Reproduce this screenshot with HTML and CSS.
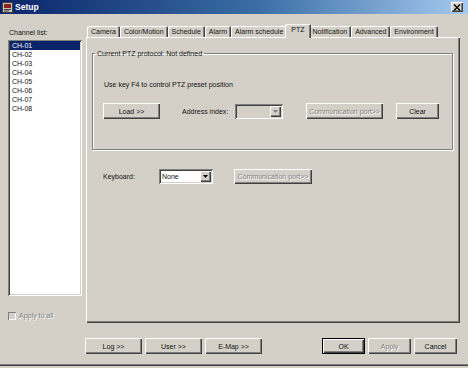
FILE: index.html
```html
<!DOCTYPE html>
<html lang="en">

<head>
    <meta charset="UTF-8" />
    <title>Setup</title>
    <link rel="stylesheet" href="styles.css">
</head>

<body>
    <div class="window">
        <div class="titlebar">
            <svg class="app-icon" width="11" height="11" viewBox="0 0 11 11">
                <rect x="0.5" y="0.5" width="10" height="10" fill="#c8c4bc" stroke="#404040" />
                <rect x="2" y="2" width="7" height="4" fill="#8a2020" />
                <path d="M2 7.5h7M2 9h5" stroke="#404040" />
            </svg>
            <span class="title">Setup</span>
            <span class="close">
                <svg width="8" height="7" viewBox="0 0 8 7">
                    <path d="M1 0.5l6 6M7 0.5l-6 6" stroke="#000" stroke-width="1.3" />
                </svg>
            </span>
        </div>

        <div class="content">
            <div class="side">
                <p class="label">Channel list:</p>
                <ul class="listbox">
                    <li class="selected">CH-01</li>
                    <li>CH-02</li>
                    <li>CH-03</li>
                    <li>CH-04</li>
                    <li>CH-05</li>
                    <li>CH-06</li>
                    <li>CH-07</li>
                    <li>CH-08</li>
                </ul>
                <div class="check disabled"><span class="box"></span>Apply to all</div>
            </div>

            <div class="main">
                <div class="tabs">
                    <span class="tab">Camera</span>
                    <span class="tab">Color/Motion</span>
                    <span class="tab">Schedule</span>
                    <span class="tab">Alarm</span>
                    <span class="tab">Alarm schedule</span>
                    <span class="tab active">PTZ</span>
                    <span class="tab">Notification</span>
                    <span class="tab">Advanced</span>
                    <span class="tab">Environment</span>
                </div>
                <div class="panel">
                    <fieldset class="group">
                        <legend>Current PTZ protocol: Not defined</legend>
                        <p class="hint">Use key F4 to control PTZ preset position</p>
                        <div class="row">
                            <button class="btn load">Load &gt;&gt;</button>
                            <span class="field-label address">Address index:</span>
                            <span class="combo address-combo disabled">
                                <span class="combo-value"></span>
                                <span class="drop">
                                    <svg width="5" height="3" viewBox="0 0 5 3"><path d="M0 0h5L2.5 3z" fill="#808080" /></svg>
                                </span>
                            </span>
                            <button class="btn port" disabled>Communication port&gt;&gt;</button>
                            <button class="btn clear">Clear</button>
                        </div>
                    </fieldset>

                    <div class="row keyboard">
                        <span class="field-label kb-label">Keyboard:</span>
                        <span class="combo kb-combo">
                            <span class="combo-value">None</span>
                            <span class="drop">
                                <svg width="5" height="3" viewBox="0 0 5 3"><path d="M0 0h5L2.5 3z" fill="#000" /></svg>
                            </span>
                        </span>
                        <button class="btn kb-port" disabled>Communication port&gt;&gt;</button>
                    </div>
                </div>
            </div>
        </div>

        <div class="footer">
            <div class="left-buttons">
                <button class="btn wide">Log &gt;&gt;</button>
                <button class="btn wide">User &gt;&gt;</button>
                <button class="btn wide">E-Map &gt;&gt;</button>
            </div>
            <div class="right-buttons">
                <button class="btn small default">OK</button>
                <button class="btn small" disabled>Apply</button>
                <button class="btn small">Cancel</button>
            </div>
        </div>
    </div>
</body>

</html>
```

FILE: styles.css
```css
body {
    margin: 0;
    background-color: #d4d0c8;
    font-family: "Liberation Sans", Arial, sans-serif;
    font-size: 7px;
    color: #111;
}

.window {
    width: 468px;
    height: 366px;
    background-color: #d4d0c8;
    box-sizing: border-box;
    border-bottom: 1px solid #404040;
    box-shadow: inset 0 -1px #808080;
}

.titlebar {
    height: 14px;
    display: flex;
    align-items: center;
    background: linear-gradient(to right, #0a246a, #3a6ea5 55%, #a6caf0);
    color: white;
}

.app-icon {
    margin-left: 2px;
}

.title {
    margin-left: 2px;
    font-size: 8.5px;
    font-weight: bold;
}

.close {
    margin-left: auto;
    margin-right: 5px;
    width: 12px;
    height: 10px;
    display: flex;
    align-items: center;
    justify-content: center;
    background: #d4d0c8;
    box-shadow: inset 1px 1px #fff, inset -1px -1px #404040, inset -2px -2px #808080;
}

.content {
    display: flex;
    height: 309px;
    gap: 4px;
}

.side {
    padding: 14px 0 0 8px;
    width: 74px;
}

.label {
    margin: 0 0 3px 1px;
    line-height: 9px;
}

.listbox {
    list-style: none;
    margin: 0;
    padding: 1px 2px;
    height: 256px;
    box-sizing: border-box;
    background: white;
    box-shadow: inset 1px 1px #808080, inset -1px -1px #fff, inset 2px 2px #404040, inset -2px -2px #d4d0c8;
}

.listbox li {
    line-height: 9px;
    padding-left: 2px;
}

.listbox .selected {
    background: #0a246a;
    color: white;
}

.check {
    margin-top: 15px;
    display: flex;
    align-items: center;
    gap: 3px;
    line-height: 9px;
}

.box {
    width: 8px;
    height: 8px;
    box-sizing: border-box;
    background: #d4d0c8;
    box-shadow: inset 1px 1px #808080, inset -1px -1px #fff;
}

.disabled {
    color: #808080;
    text-shadow: 1px 1px #fff;
}

.main {
    padding-top: 10px;
    width: 374px;
}

.tabs {
    display: flex;
    align-items: flex-end;
    height: 13px;
    padding-left: 1px;
}

.tab {
    height: 11px;
    line-height: 11px;
    padding: 0 4px;
    box-shadow: inset 1px 1px #fff, inset -1px 0 #404040, inset -2px 0 #808080;
    border-radius: 2px 2px 0 0;
}

.tab.active {
    position: relative;
    height: 14px;
    margin: 0 -2px -1px;
    padding: 0 6px;
    line-height: 12px;
    background: #d4d0c8;
    z-index: 1;
}

.panel {
    height: 286px;
    box-sizing: border-box;
    padding: 12px 7px 0 6px;
    box-shadow: inset 1px 1px #fff, inset -1px -1px #404040, inset -2px -2px #808080;
}

.group {
    margin: 0;
    padding: 22px 0 30px 10px;
    border: 1px solid #808080;
    box-shadow: inset 1px 1px #fff, 1px 1px #fff;
    height: 101px;
    box-sizing: border-box;
}

.group legend {
    padding: 0 2px;
    margin-left: -8px;
    line-height: 9px;
}

.hint {
    margin: 0 0 14px 1px;
    line-height: 9px;
}

.row {
    display: flex;
    align-items: center;
}

.btn {
    font-family: inherit;
    font-size: 7px;
    height: 16px;
    padding: 0;
    border: none;
    background: #d4d0c8;
    color: #111;
    box-shadow: inset 1px 1px #fff, inset -1px -1px #404040, inset -2px -2px #808080;
}

.btn:disabled {
    color: #808080;
    text-shadow: 1px 1px #fff;
}

.load {
    width: 57px;
}

.field-label.address {
    margin-left: 22px;
    width: 53px;
}

.combo {
    display: flex;
    height: 15px;
    box-sizing: border-box;
    padding: 2px;
    background: white;
    box-shadow: inset 1px 1px #808080, inset -1px -1px #fff, inset 2px 2px #404040, inset -2px -2px #d4d0c8;
}

.combo.disabled {
    background: #d4d0c8;
}

.combo-value {
    flex: 1;
    line-height: 11px;
    padding-left: 1px;
}

.drop {
    width: 11px;
    display: flex;
    align-items: center;
    justify-content: center;
    background: #d4d0c8;
    box-shadow: inset 1px 1px #fff, inset -1px -1px #404040, inset -2px -2px #808080;
}

.address-combo {
    width: 48px;
    margin-right: 23px;
}

.port {
    width: 77px;
    margin-right: 13px;
}

.clear {
    width: 43px;
}

.keyboard {
    margin: 19px 0 0 11px;
}

.kb-label {
    width: 56px;
}

.kb-combo {
    width: 54px;
    margin-right: 21px;
}

.kb-port {
    width: 78px;
    height: 15px;
}

.footer {
    display: flex;
    padding: 15px 11px 0 85px;
}

.left-buttons,
.right-buttons {
    display: flex;
    gap: 3px;
}

.right-buttons {
    margin-left: auto;
}

.wide {
    width: 57px;
}

.small {
    width: 43px;
}

.default {
    box-shadow: inset 0 0 0 1px #000, inset 2px 2px #fff, inset -2px -2px #404040, inset -3px -3px #808080;
}
```
